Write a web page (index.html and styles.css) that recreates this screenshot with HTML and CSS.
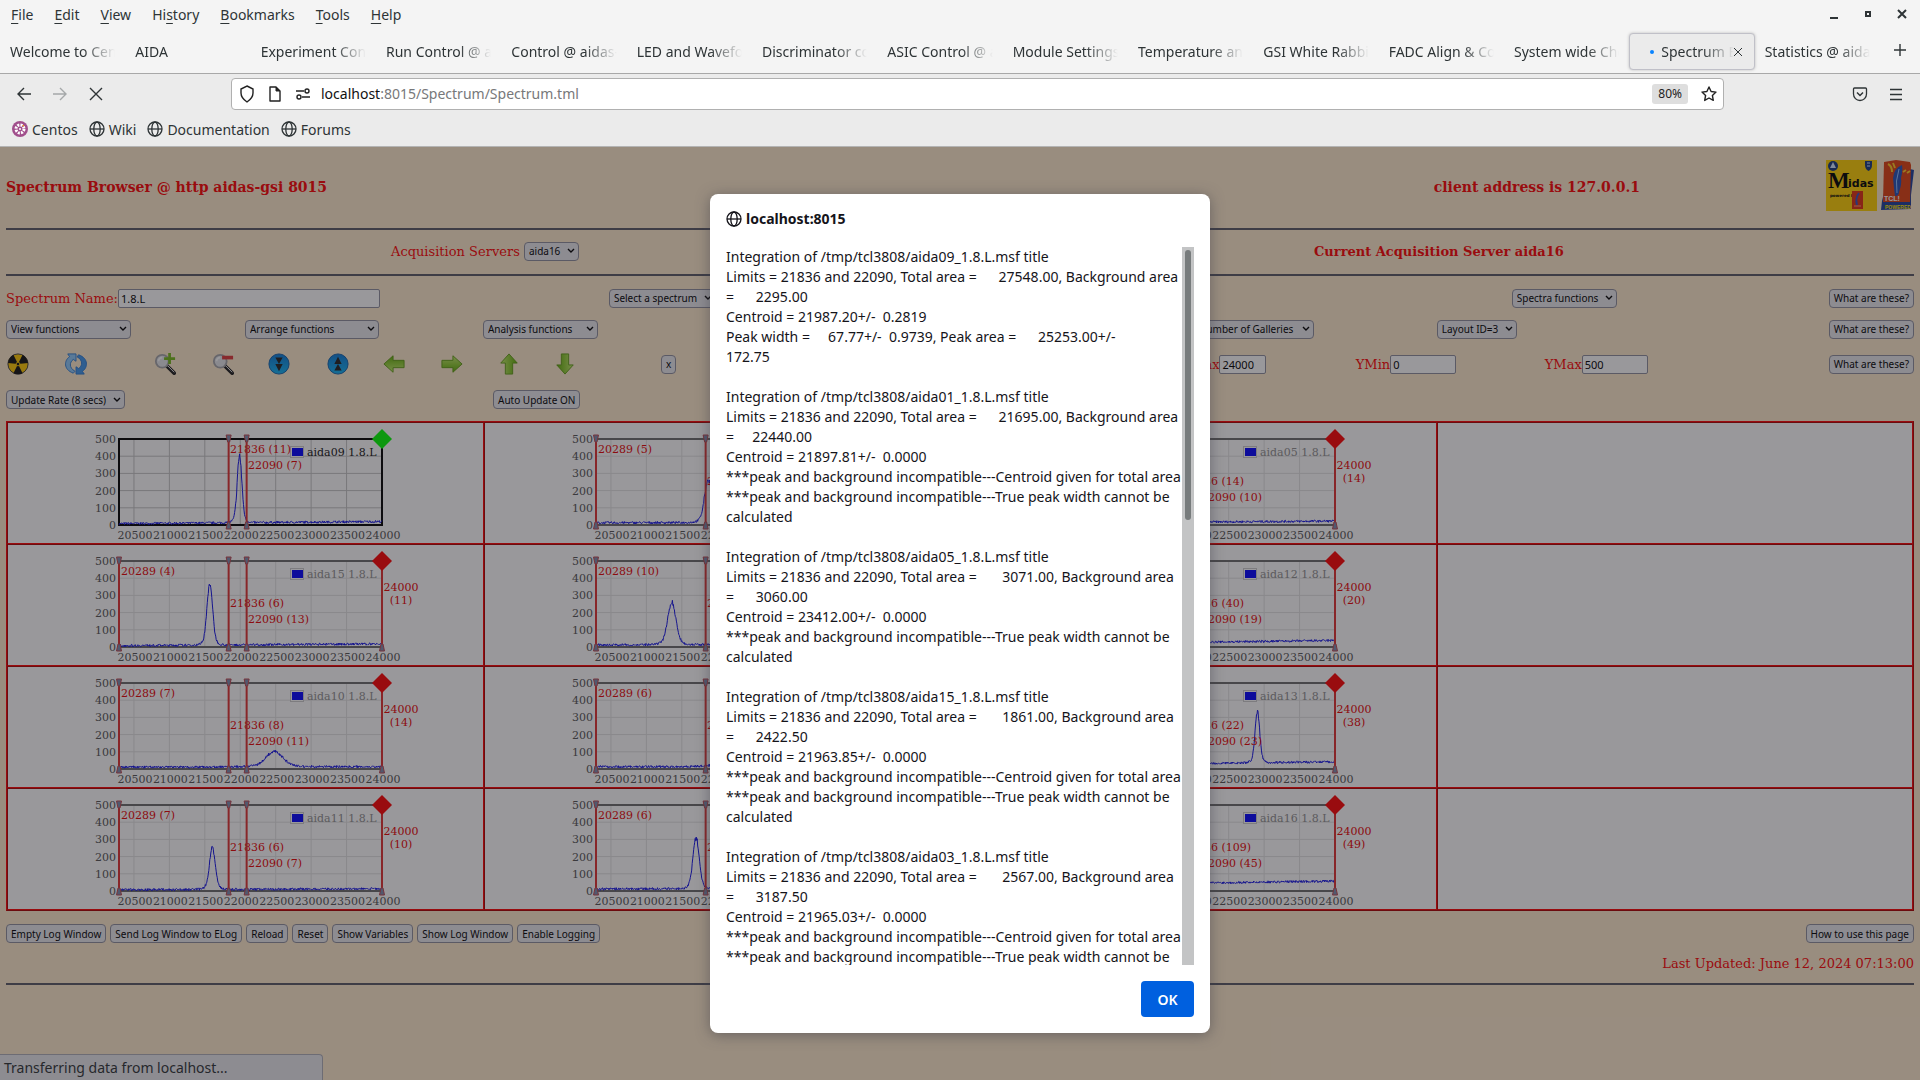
FILE: index.html
```html
<!DOCTYPE html>
<html lang="en">
<head>
    <meta charset="UTF-8">
    <meta name="viewport" content="width=device-width, initial-scale=1.0">
    <title>Spectrum Browser @ http aidas-gsi 8015</title>
    <link rel="stylesheet" href="styles.css">
</head>
<body>

    <svg class="defs" aria-hidden="true">
        <symbol id="globe" viewBox="0 0 16 16">
            <g fill="none" stroke="currentColor" stroke-width="1.3">
                <circle cx="8" cy="8" r="7"/>
                <ellipse cx="8" cy="8" rx="3.2" ry="7"/>
                <path d="M1 8h14"/>
            </g>
        </symbol>
        <linearGradient id="green" x1="0" y1="0" x2="0" y2="1">
            <stop offset="0" stop-color="#c4ee6a"/>
            <stop offset="1" stop-color="#5fae00"/>
        </linearGradient>
        <linearGradient id="blue" x1="0" y1="0" x2="0" y2="1">
            <stop offset="0" stop-color="#0a7ad8"/>
            <stop offset="1" stop-color="#10b4f4"/>
        </linearGradient>
        <symbol id="arrow" viewBox="0 0 24 24">
            <path d="M1 8h12V3l10 9-10 9v-5H1z" fill="url(#green)" stroke="#5d9a10"/>
        </symbol>
        <symbol id="lens" viewBox="0 0 24 24">
            <path d="M14 14l8 8" stroke="#1c1c1c" stroke-width="4" stroke-linecap="round"/>
            <path d="M15 14l7 7" stroke="#fff" stroke-width="1"/>
            <circle cx="9" cy="9" r="7" fill="#e4e6ea" stroke="#a5a5a8" stroke-width="2"/>
            <path d="M5 9a4 4 0 0 1 4-4" fill="none" stroke="#fff" stroke-width="2"/>
        </symbol>
    </svg>

    <!-- browser chrome -->
    <header class="chrome">
        <nav class="menubar">
            <button><u>F</u>ile</button>
            <button><u>E</u>dit</button>
            <button><u>V</u>iew</button>
            <button>Hi<u>s</u>tory</button>
            <button><u>B</u>ookmarks</button>
            <button><u>T</u>ools</button>
            <button><u>H</u>elp</button>
            <div class="window-buttons">
                <button aria-label="Minimize"><svg width="10" height="12"><path d="M1 10h8" stroke="#2e3436" stroke-width="2"/></svg></button>
                <button aria-label="Maximize"><svg width="8" height="12"><path d="M2 4h4v4H2z" fill="none" stroke="#2e3436" stroke-width="2"/></svg></button>
                <button aria-label="Close window"><svg width="10" height="12"><path d="M1 2l8 8M9 2l-8 8" stroke="#2e3436" stroke-width="2"/></svg></button>
            </div>
        </nav>

        <div class="tabbar">
            <div class="tabs">
                <button class="tab"><span>Welcome to CentOS</span></button>
                <button class="tab"><span>AIDA</span></button>
                <button class="tab"><span>Experiment Control</span></button>
                <button class="tab"><span>Run Control @ aidas</span></button>
                <button class="tab"><span>Control @ aidas-gsi</span></button>
                <button class="tab"><span>LED and Waveform</span></button>
                <button class="tab"><span>Discriminator control</span></button>
                <button class="tab"><span>ASIC Control @ aidas</span></button>
                <button class="tab"><span>Module Settings @</span></button>
                <button class="tab"><span>Temperature and</span></button>
                <button class="tab"><span>GSI White Rabbit</span></button>
                <button class="tab"><span>FADC Align &amp; Control</span></button>
                <button class="tab"><span>System wide Checks</span></button>
                <button class="tab active">
                    <i class="loading"></i><span>Spectrum Browser</span>
                    <svg width="8" height="8"><path d="M0 0l8 8M8 0l-8 8" stroke="#2e3436"/></svg>
                </button>
                <button class="tab"><span>Statistics @ aidas</span></button>
            </div>
            <button class="new-tab" aria-label="New tab"><svg width="12" height="12"><path d="M6 0v12M0 6h12" stroke="#2e3436" stroke-width="1.4"/></svg></button>
        </div>

        <div class="navbar">
            <div class="nav-buttons">
                <button aria-label="Back"><svg width="16" height="16"><path d="M15 8H2M8 2L2 8l6 6" fill="none" stroke="#2e3436" stroke-width="1.4"/></svg></button>
                <button aria-label="Forward"><svg width="16" height="16"><path d="M1 8h13M8 2l6 6-6 6" fill="none" stroke="#a5a8a9" stroke-width="1.4"/></svg></button>
                <button aria-label="Stop"><svg width="16" height="16"><path d="M2 2l12 12M14 2L2 14" fill="none" stroke="#2e3436" stroke-width="1.4"/></svg></button>
            </div>
            <div class="urlbar">
                <svg width="16" height="18" viewBox="0 0 16 18"><path d="M8 1l6 3v4c0 4-3 7-6 9-3-2-6-5-6-9V4z" fill="none" stroke="#222" stroke-width="1.4"/></svg>
                <svg width="16" height="16" viewBox="0 0 16 16"><path d="M3 1h6l4 4v10H3z" fill="none" stroke="#222" stroke-width="1.4" stroke-linejoin="round"/><path d="M9 1v4h4z" fill="#222" stroke="#222"/></svg>
                <svg width="16" height="16" viewBox="0 0 16 16"><g fill="none" stroke="#222" stroke-width="1.4"><path d="M1 5h8M7 11h8"/><circle cx="12" cy="5" r="2"/><circle cx="4" cy="11" r="2"/></g></svg>
                <div class="url"><b>localhost</b>:8015/Spectrum/Spectrum.tml</div>
                <button class="zoom">80%</button>
                <button aria-label="Bookmark this page"><svg width="18" height="18" viewBox="0 0 18 18"><path d="M9 2l2.100 4.500 4.900.600-3.600 3.400.900 4.900L9 13l-4.300 2.400.900-4.900L2 7.100l4.900-.600z" fill="none" stroke="#222" stroke-width="1.4" stroke-linejoin="round"/></svg></button>
            </div>
            <div class="nav-end">
                <button aria-label="Save to Pocket"><svg width="16" height="16" viewBox="0 0 16 16"><g fill="none" stroke="#2e3436" stroke-width="1.3"><path d="M2.500 2h11q1 0 1 1v5a6.500 6.500 0 0 1-13 0V3q0-1 1-1z"/><path d="M5 6.500l3 3 3-3" stroke-width="1.5"/></g></svg></button>
                <button aria-label="Menu"><svg width="14" height="14"><path d="M1 2.500h12M1 7.500h12M1 12.500h12" stroke="#2e3436" stroke-width="1.3"/></svg></button>
            </div>
        </div>

        <nav class="bookmarks">
            <a href="#"><svg width="16" height="16" viewBox="0 0 16 16"><circle cx="8" cy="8" r="8" fill="#a14f8c"/><circle cx="8" cy="8" r="4" fill="none" stroke="#fff" stroke-width="3" stroke-dasharray="2 1.140"/><circle cx="8" cy="8" r="1" fill="#fff"/><path d="M10 4h2v2z" fill="#f0a020"/></svg>Centos</a>
            <a href="#"><svg width="16" height="16"><use href="#globe"/></svg>Wiki</a>
            <a href="#"><svg width="16" height="16"><use href="#globe"/></svg>Documentation</a>
            <a href="#"><svg width="16" height="16"><use href="#globe"/></svg>Forums</a>
        </nav>
    </header>

    <main class="viewport">
        <div class="page">
            <div class="page-header">
                <h3>Spectrum Browser @ http aidas-gsi 8015</h3>
                <h3>client address is 127.0.0.1</h3>
                <div class="logos">
                    <svg width="51" height="51" viewBox="0 0 51 51">
                        <rect width="51" height="51" fill="#ffd000"/>
                        <circle cx="7" cy="6" r="5" fill="#14387c"/>
                        <path d="M4 8h6L7 2z" fill="#cfe4ff"/>
                        <path d="M39 1h7v4q0 4-3.500 6Q39 9 39 5z" fill="#14387c"/>
                        <path d="M41 3h3M41 6h3" stroke="#cfe4ff"/>
                        <text x="2" y="28" class="midas-m">M</text>
                        <text x="22" y="27" class="midas-text">idas</text>
                        <text x="4" y="37" class="midas-small">powered by</text>
                        <rect x="26" y="31" width="11" height="18" fill="#e03010"/>
                        <path d="M33 33q-4 5-2 12" fill="none" stroke="#3050c0" stroke-width="2"/>
                        <path d="M28 46h7" stroke="#ff9a70"/>
                    </svg>
                    <svg width="33" height="51" viewBox="0 0 33 51">
                        <path d="M29 9l4 1-3 25v14l-30 1 1-9 5-20z" fill="#1c3f9c"/>
                        <path d="M3 2l12-2 14 2 1 3-1 37H2z" fill="#e04010"/>
                        <path d="M21 5q-8 3-9 13l1 10 1 8q4 0 4-4 3-8 2-14 2-8 1-13z" fill="#2450b8"/>
                        <path d="M18 9q-4 12-2 24" fill="none" stroke="#8ec0ff"/>
                        <path d="M7 4q4 2 4 8M12 3l2 5M22 12l3-2M26 13l3-2" fill="none" stroke="#ffc820" stroke-width="2"/>
                        <text x="3" y="41" class="tcl-text">TCL!</text>
                        <text x="4" y="49" class="tcl-powered">POWERED</text>
                    </svg>
                </div>
            </div>
            <hr>
            <div class="servers">
                <div>
                    <label for="server">Acquisition Servers</label>
                    <select id="server"><option>aida16</option></select>
                </div>
                <strong>Current Acquisition Server aida16</strong>
            </div>
            <hr>

            <div class="controls">
                <div class="row row-name">
                    <div class="field"><label for="name">Spectrum Name:</label><input id="name" class="name" type="text" value="1.8.L"></div>
                    <select aria-label="Select a spectrum"><option>Select a spectrum</option></select>
                    <select aria-label="Spectra functions"><option>Spectra functions</option></select>
                    <button class="btn">What are these?</button>
                </div>
                <div class="row row-functions">
                    <select class="view" aria-label="View functions"><option>View functions</option></select>
                    <select class="arrange" aria-label="Arrange functions"><option>Arrange functions</option></select>
                    <select class="analysis" aria-label="Analysis functions"><option>Analysis functions</option></select>
                    <select class="galleries" aria-label="Number of Galleries"><option>Number of Galleries</option></select>
                    <select aria-label="Layout"><option>Layout ID=3</option></select>
                    <button class="btn">What are these?</button>
                </div>
                <div class="row row-icons">
                    <button class="icon" aria-label="Clear"><svg viewBox="0 0 24 24"><circle cx="12" cy="12" r="11" fill="#ffc800" stroke="#333"/><path d="M12 12L1 11Q2 5 7 2zM12 12l11-1Q22 5 17 2zM12 12L7 22a11 11 0 0 0 10 0z" fill="#111"/><circle cx="12" cy="12" r="2" fill="#111" stroke="#ffc800"/></svg></button>
                    <button class="icon" aria-label="Refresh"><svg viewBox="0 0 24 24"><g fill="#8cc8fa" stroke="#2a78d0"><path d="M9 22C-2 18-1 8 5 4L3 1h9v8L9 7c-4 3-5 9 2 13z"/><path d="M15 2c11 4 10 14 4 18l2 3h-9v-8l3 2c4-3 5-9-2-13z" fill="#3f96ec"/></g></svg></button>
                    <button class="icon" aria-label="Zoom in"><svg viewBox="0 0 24 24"><use href="#lens"/><path d="M17 0v12M11 6h12" stroke="#74b818" stroke-width="3"/></svg></button>
                    <button class="icon" aria-label="Zoom out"><svg viewBox="0 0 24 24"><use href="#lens"/><path d="M11 5h12" stroke="#e03838" stroke-width="4"/></svg></button>
                    <button class="icon" aria-label="Scroll down"><svg viewBox="0 0 24 24"><circle cx="12" cy="12" r="11" fill="url(#blue)" stroke="#0a5ca8"/><path d="M8 5h8l-4 7zM8 12h8l-4 8z" fill="#222"/></svg></button>
                    <button class="icon" aria-label="Scroll up"><svg viewBox="0 0 24 24"><circle cx="12" cy="12" r="11" fill="url(#blue)" stroke="#0a5ca8"/><path d="M8 12h8l-4-8zM8 19h8l-4-7z" fill="#222"/></svg></button>
                    <button class="icon left" aria-label="Move left"><svg viewBox="0 0 24 24"><use href="#arrow"/></svg></button>
                    <button class="icon" aria-label="Move right"><svg viewBox="0 0 24 24"><use href="#arrow"/></svg></button>
                    <button class="icon up" aria-label="Move up"><svg viewBox="0 0 24 24"><use href="#arrow"/></svg></button>
                    <button class="icon down" aria-label="Move down"><svg viewBox="0 0 24 24"><use href="#arrow"/></svg></button>
                    <button class="btn">x</button>
                    <div class="field"><label for="xmin">XMin</label><input id="xmin" class="range-x" type="text" value="20289"></div>
                    <div class="field"><label for="xmax">XMax</label><input id="xmax" class="range-x" type="text" value="24000"></div>
                    <div class="field"><label for="ymin">YMin</label><input id="ymin" class="range-y" type="text" value="0"></div>
                    <div class="field"><label for="ymax">YMax</label><input id="ymax" class="range-y" type="text" value="500"></div>
                    <button class="btn">What are these?</button>
                </div>
                <div class="row row-update">
                    <select aria-label="Update rate"><option>Update Rate (8 secs)</option></select>
                    <button class="btn">Auto Update ON</button>
                </div>
            </div>

            <table class="gallery"><tbody id="gallery"></tbody></table>

            <div class="footer">
                <button class="btn">Empty Log Window</button>
                <button class="btn">Send Log Window to ELog</button>
                <button class="btn">Reload</button>
                <button class="btn">Reset</button>
                <button class="btn">Show Variables</button>
                <button class="btn">Show Log Window</button>
                <button class="btn">Enable Logging</button>
                <button class="btn help">How to use this page</button>
            </div>
            <p class="updated">Last Updated: June 12, 2024 07:13:00</p>
            <hr>
        </div>

        <div class="status">Transferring data from localhost...</div>

        <div class="overlay">
            <div class="dialog" role="dialog" aria-labelledby="dialog-title">
                <h2 id="dialog-title"><svg width="16" height="16"><use href="#globe"/></svg>localhost:8015</h2>
                <div class="dialog-body">
<div class="message">Integration of /tmp/tcl3808/aida09_1.8.L.msf title
Limits = 21836 and 22090, Total area =      27548.00, Background area =      2295.00
Centroid = 21987.20+/-  0.2819
Peak width =     67.77+/-  0.9739, Peak area =      25253.00+/- 
172.75

Integration of /tmp/tcl3808/aida01_1.8.L.msf title
Limits = 21836 and 22090, Total area =      21695.00, Background area =     22440.00
Centroid = 21897.81+/-  0.0000
***peak and background incompatible---Centroid given for total area
***peak and background incompatible---True peak width cannot be calculated

Integration of /tmp/tcl3808/aida05_1.8.L.msf title
Limits = 21836 and 22090, Total area =       3071.00, Background area =      3060.00
Centroid = 23412.00+/-  0.0000
***peak and background incompatible---True peak width cannot be calculated

Integration of /tmp/tcl3808/aida15_1.8.L.msf title
Limits = 21836 and 22090, Total area =       1861.00, Background area =      2422.50
Centroid = 21963.85+/-  0.0000
***peak and background incompatible---Centroid given for total area
***peak and background incompatible---True peak width cannot be calculated

Integration of /tmp/tcl3808/aida03_1.8.L.msf title
Limits = 21836 and 22090, Total area =       2567.00, Background area =      3187.50
Centroid = 21965.03+/-  0.0000
***peak and background incompatible---Centroid given for total area
***peak and background incompatible---True peak width cannot be calculated</div>
                    <div class="scrollbar"><div class="thumb"></div></div>
                </div>
                <button class="ok">OK</button>
            </div>
        </div>
    </main>

    <script src="script.js"></script>
</body>
</html>
```

FILE: styles.css
```css
* {
    box-sizing: border-box;
}
body {
    margin: 0;
    height: 100vh;
    display: flex;
    flex-direction: column;
    overflow: hidden;
    font-family: "Noto Sans", "Open Sans", sans-serif;
    font-size: 14px;
    color: #2e3436;
}
button {
    font: inherit;
    color: inherit;
    background: none;
    border: none;
    padding: 0;
}
svg {
    display: block;
    flex: none;
}
.defs {
    position: absolute;
    width: 0;
    height: 0;
}

/* browser chrome */
.chrome {
    background: #ebebeb;
    border-bottom: 1px solid #b4b4b4;
}
.menubar {
    display: flex;
    align-items: center;
    gap: 21px;
    height: 30px;
    padding: 0 13px 2px 11px;
    background: #f4f4f4;
}
.menubar u {
    text-underline-offset: 3px;
}
.window-buttons {
    display: flex;
    gap: 25px;
    margin-left: auto;
}
.tabbar {
    display: flex;
    height: 44px;
    padding-bottom: 3px;
    background: #f4f4f4;
    border-bottom: 1px solid #a8a8a8;
}
.tabs {
    flex: 1;
    display: grid;
    grid-template-columns: repeat(15, 1fr);
}
.tab {
    display: flex;
    align-items: center;
    min-width: 0;
    margin-top: 3px;
    padding: 0 10px;
    text-align: left;
}
.tab span {
    flex: 1;
    overflow: hidden;
    white-space: nowrap;
    -webkit-mask-image: linear-gradient(to left, transparent, #000 32px);
    mask-image: linear-gradient(to left, transparent, #000 32px);
}
.tab.active {
    background: #ebebeb;
    border: 1px solid #c0c0c8;
    border-radius: 4px;
    box-shadow: 0 0 3px #bbb;
    padding: 0 12px 0 20px;
}
.loading {
    width: 4px;
    height: 4px;
    margin-right: 7px;
    border-radius: 50%;
    background: #0a84ff;
}
.new-tab {
    width: 40px;
    display: flex;
    align-items: center;
    justify-content: center;
}
.navbar {
    display: grid;
    grid-template-columns: 231fr 1493fr 196fr;
    align-items: center;
    height: 40px;
}
.nav-buttons {
    display: flex;
    gap: 20px;
    padding-left: 16px;
}
.urlbar {
    display: flex;
    align-items: center;
    gap: 12px;
    height: 32px;
    padding: 0 5px 1px 7px;
    background: #fff;
    border: 1px solid #b0b0b0;
    border-radius: 4px;
}
.url {
    flex: 1;
    margin-left: -2px;
    color: #77787a;
}
.url b {
    font-weight: normal;
    color: #111;
}
.zoom {
    height: 20px;
    padding: 0 6px;
    font-size: 12px;
    background: #dedede;
    border-radius: 3px;
    color: #222;
}
.nav-end {
    display: flex;
    align-items: center;
    justify-content: flex-end;
    gap: 21px;
    padding-right: 17px;
}
.bookmarks {
    display: flex;
    gap: 11px;
    height: 32px;
    padding: 0 12px 2px;
}
.bookmarks a {
    display: flex;
    align-items: center;
    gap: 4px;
    color: inherit;
    text-decoration: none;
}

/* page */
.viewport {
    flex: 1;
    min-height: 0;
    position: relative;
    background: #ffebcd;
}
.page {
    padding: 0 6px;
    font-family: "DejaVu Serif", serif;
    font-size: 13px;
    color: #f00;
}
hr {
    margin: 0;
    border: solid;
    border-width: 1px 0;
    border-color: #5a5a64 #84848c;
}
.page-header {
    display: grid;
    grid-template-columns: 1427fr 392fr auto;
    align-items: center;
    height: 81px;
    padding-bottom: 2px;
}
h3 {
    margin: 0;
    font-size: 14px;
}
.logos {
    display: flex;
    gap: 4px;
    padding-bottom: 2px;
}
.midas-m {
    font: bold 23px "Liberation Serif", serif;
}
.midas-text {
    font: bold 11px "DejaVu Sans", sans-serif;
}
.midas-small {
    font: bold 4px "DejaVu Sans", sans-serif;
}
.tcl-text {
    font: bold 7px "Liberation Sans", sans-serif;
    fill: #fff;
}
.tcl-powered {
    font: bold 5px "Liberation Sans", sans-serif;
    fill: #ffe600;
}
.servers {
    display: grid;
    grid-template-columns: 385fr 923fr 600fr;
    align-items: center;
    height: 44px;
    padding-bottom: 2px;
}
.servers div {
    grid-column: 2;
}
input, select, .btn {
    height: 19px;
    font-family: "Noto Sans", sans-serif;
    font-size: 10px;
    color: #000;
    border: 1px solid #8f8f9d;
}
select {
    appearance: none;
    padding: 0 17px 0 4px;
    border-radius: 4px;
    background: #e9e9ed url("data:image/svg+xml,%3Csvg xmlns='http://www.w3.org/2000/svg' width='8' height='6'%3E%3Cpath d='M1 1l3 3 3-3' fill='none' stroke='%23000' stroke-width='1.4'/%3E%3C/svg%3E") no-repeat right 3px center;
}
.btn {
    padding: 0 4px;
    border-radius: 4px;
    background: #e9e9ed;
    white-space: nowrap;
}
input {
    padding: 0 2px;
    font-size: 11px;
    border-radius: 2px;
    background: #fff;
}
.controls {
    padding: 7px 0 5px;
}
.row {
    display: grid;
    align-items: center;
    justify-items: start;
}
.row-name {
    grid-template-columns: 603fr 903fr 317fr auto;
    height: 30px;
}
.row-functions {
    grid-template-columns: 239fr 238fr 711fr 243fr 392fr auto;
    height: 32px;
}
.row-icons {
    grid-template-columns: 58fr 89fr 58fr 56fr 59fr 56fr 58fr 57fr 56fr 108fr 275fr 246fr 174fr 189fr 284fr auto;
    height: 38px;
}
.row-update {
    grid-template-columns: 487fr 1421fr;
    height: 33px;
}
.field {
    display: flex;
    align-items: center;
}
.name {
    width: 262px;
}
.view {
    width: 125px;
}
.arrange {
    width: 134px;
}
.analysis {
    width: 115px;
}
.galleries {
    width: 120px;
}
.range-x {
    width: 47px;
}
.range-y {
    width: 66px;
}
.icon {
    padding: 0 1px;
}
.icon svg {
    width: 22px;
    height: 22px;
}
.left svg {
    transform: rotate(180deg);
}
.up svg {
    transform: rotate(-90deg);
}
.down svg {
    transform: rotate(90deg);
}

/* spectra */
.gallery {
    width: 100%;
    table-layout: fixed;
    border: 1px outset #f00;
    border-spacing: 0;
    background: #fff;
}
.gallery td {
    height: 122px;
    padding: 0 0 0 37px;
    border: 1px inset #f00;
}
.chart {
    overflow: visible;
    font-size: 11px;
}
.tick {
    fill: #545454;
}
.grid {
    stroke: #e2e2e2;
}
.frame {
    fill: none;
    stroke: #6c6c6c;
    stroke-width: 2;
}
.trace {
    fill: none;
    stroke: #1010e8;
}
.limit {
    stroke: #e03030;
    stroke-width: 2;
}
.handle {
    fill: #7c8cb0;
    stroke: #c04850;
}
.limit-text {
    fill: #e80000;
}
.legend-box {
    fill: #fff;
    stroke: #ccc;
}
.legend-swatch {
    fill: #00f;
}
.legend-text {
    fill: #909090;
}
.corner {
    fill: #f00;
}
.selected .frame {
    stroke: #000;
}
.selected .legend-text {
    fill: #111;
}
.selected .corner {
    fill: #0f0;
}
.selected .grid {
    stroke: #c4c4c4;
}

.footer {
    display: flex;
    gap: 4px;
    margin-top: 13px;
}
.help {
    margin-left: auto;
}
.updated {
    margin: 11px 0 9px;
    line-height: 20px;
    text-align: right;
}
.status {
    position: absolute;
    left: 0;
    bottom: 0;
    width: 323px;
    height: 26px;
    padding: 0 4px;
    line-height: 25px;
    background: #e9e9ed;
    border: 1px solid #b0b0b8;
    border-width: 1px 1px 0 0;
    border-radius: 0 4px 0 0;
}

/* alert */
.overlay {
    position: absolute;
    inset: 0;
    display: flex;
    align-items: center;
    justify-content: center;
    background: rgba(28, 27, 34, 0.45);
}
.dialog {
    display: flex;
    flex-direction: column;
    width: 500px;
    height: 90%;
    padding: 16px;
    background: #fff;
    border-radius: 8px;
    box-shadow: 0 2px 14px rgba(58, 57, 68, 0.5);
    color: #15141a;
}
.dialog h2 {
    display: flex;
    align-items: center;
    gap: 4px;
    margin: 0 0 19px;
    font-size: 14px;
    line-height: 18px;
}
.dialog-body {
    flex: 1;
    min-height: 0;
    display: flex;
    margin-bottom: 16px;
}
.message {
    flex: 1;
    overflow: hidden;
    line-height: 20px;
    white-space: pre-wrap;
}
.scrollbar {
    width: 12px;
    padding: 3px;
    background: #c3c4c5;
}
.thumb {
    width: 6px;
    height: 38%;
    border-radius: 3px;
    background: #777b7c;
}
.ok {
    align-self: flex-end;
    width: 53px;
    height: 36px;
    background: #0060df;
    border-radius: 4px;
    color: #fff;
    font-weight: 600;
}
```

FILE: script.js
```javascript
// peaks: [channel, height, sigma], base: [left, right]
// limits: counts shown next to 20289, 21836, 22090 and 24000
const spectra = [
    { name: 'aida09', peak: [21990, 390, 32], base: [8, 20], limits: [null, 11, 7, null], selected: true },
    { name: 'aida01', peak: [21875, 250, 52], base: [13, 16], limits: [5, 95, 61, 9] },
    { name: 'aida05', peak: null, base: [12, 23], limits: [8, 14, 10, 14] },
    { name: 'aida15', peak: [21570, 355, 38], base: [8, 18], limits: [4, 6, 13, 11] },
    { name: 'aida03', peak: [21358, 245, 56], base: [12, 16], limits: [10, 11, 12, 9] },
    { name: 'aida12', peak: null, base: [18, 38], limits: [9, 40, 19, 20] },
    { name: 'aida10', peak: [22482, 88, 115], base: [11, 14], limits: [7, 8, 11, 14] },
    { name: 'aida04', peak: [22300, 130, 150], base: [13, 15], limits: [6, 14, 33, 8] },
    { name: 'aida13', peak: [22905, 300, 32], base: [24, 42], limits: [11, 22, 23, 38] },
    { name: 'aida11', peak: [21607, 240, 40], base: [7, 13], limits: [7, 6, 7, 10] },
    { name: 'aida07', peak: [21701, 300, 42], base: [12, 15], limits: [6, 12, 9, 8] },
    { name: 'aida16', peak: null, base: [36, 58], limits: [14, 109, 45, 49] }
];

const left = 74, right = 337, top_ = 16, bottom = 102;
const xPos = ch => left + (ch - 20289) / (24000 - 20289) * (right - left);
const yPos = n => bottom - n / 500 * (bottom - top_);

let seed = 7;
function random() {
    seed = (seed * 16807) % 2147483647;
    return seed / 2147483647 - 0.5;
}

function trace(s) {
    let points = [];
    for (let ch = 20289; ch <= 24000; ch += 7) {
        let n = s.base[0] + (s.base[1] - s.base[0]) * (ch - 20289) / 3711;
        n += random() * 14;
        if (s.peak) {
            const d = (ch - s.peak[0]) / s.peak[2];
            n += s.peak[1] * (0.9 * Math.exp(-d * d / 2) + 0.1 * Math.exp(-d * d / 8)) * (1 + random() * 0.1);
        }
        points.push(xPos(ch).toFixed(1) + ',' + yPos(n).toFixed(1));
    }
    return points.join(' ');
}

function limit(ch) {
    const x = xPos(ch);
    return `<path class="limit" d="M${x} ${top_}V${bottom}"/>
        <path class="handle" d="M${x - 2.5} ${top_ - 4}h5l-1.500 7h-2zM${x - 2.5} ${bottom + 4}h5l-1.500-7h-2z"/>`;
}

function chart(s) {
    let svg = '';
    for (let n = 0; n <= 500; n += 100) {
        svg += `<path class="grid" d="M${left} ${yPos(n)}H${right}"/>`;
        svg += `<text class="tick" x="71" y="${Math.round(yPos(n)) + 4}" text-anchor="end">${n}</text>`;
    }
    for (let ch = 20500; ch <= 24000; ch += 500) {
        svg += `<path class="grid" d="M${xPos(ch)} ${top_}V${bottom}"/>`;
        svg += `<text class="tick" x="${xPos(ch) + 1}" y="116" text-anchor="middle">${ch}</text>`;
    }
    svg += `<rect class="frame" x="${left}" y="${top_}" width="${right - left}" height="${bottom - top_}"/>`;
    svg += `<rect class="legend-box" x="245.5" y="23.5" width="13" height="11"/>
        <rect class="legend-swatch" x="247" y="25" width="11" height="8"/>
        <text class="legend-text" x="262" y="33">${s.name} 1.8.L</text>`;
    svg += `<polyline class="trace" points="${trace(s)}"/>`;

    const [a, b, c, d] = s.limits;
    const shift = a === null ? 32 : 0;
    if (a !== null) {
        svg += limit(20289) + `<text class="limit-text" x="76" y="30">20289 (${a})</text>`;
    }
    svg += limit(21836) + `<text class="limit-text" x="185" y="${62 - shift}">21836 (${b})</text>`;
    svg += limit(22090) + `<text class="limit-text" x="203" y="${78 - shift}">22090 (${c})</text>`;
    if (d !== null) {
        svg += limit(24000) + `<text class="limit-text" text-anchor="middle" x="356" y="46">24000<tspan x="356" y="59">(${d})</tspan></text>`;
    }
    svg += `<path class="corner" d="M${right} 6l10 10-10 10-10-10z"/>`;
    return `<svg class="chart${s.selected ? ' selected' : ''}" width="400" height="120">${svg}</svg>`;
}

let rows = '';
for (let r = 0; r < 4; r++) {
    rows += '<tr>';
    for (let c = 0; c < 3; c++) {
        rows += `<td>${chart(spectra[r * 3 + c])}</td>`;
    }
    rows += '<td></td></tr>';
}
document.getElementById('gallery').innerHTML = rows;
```
